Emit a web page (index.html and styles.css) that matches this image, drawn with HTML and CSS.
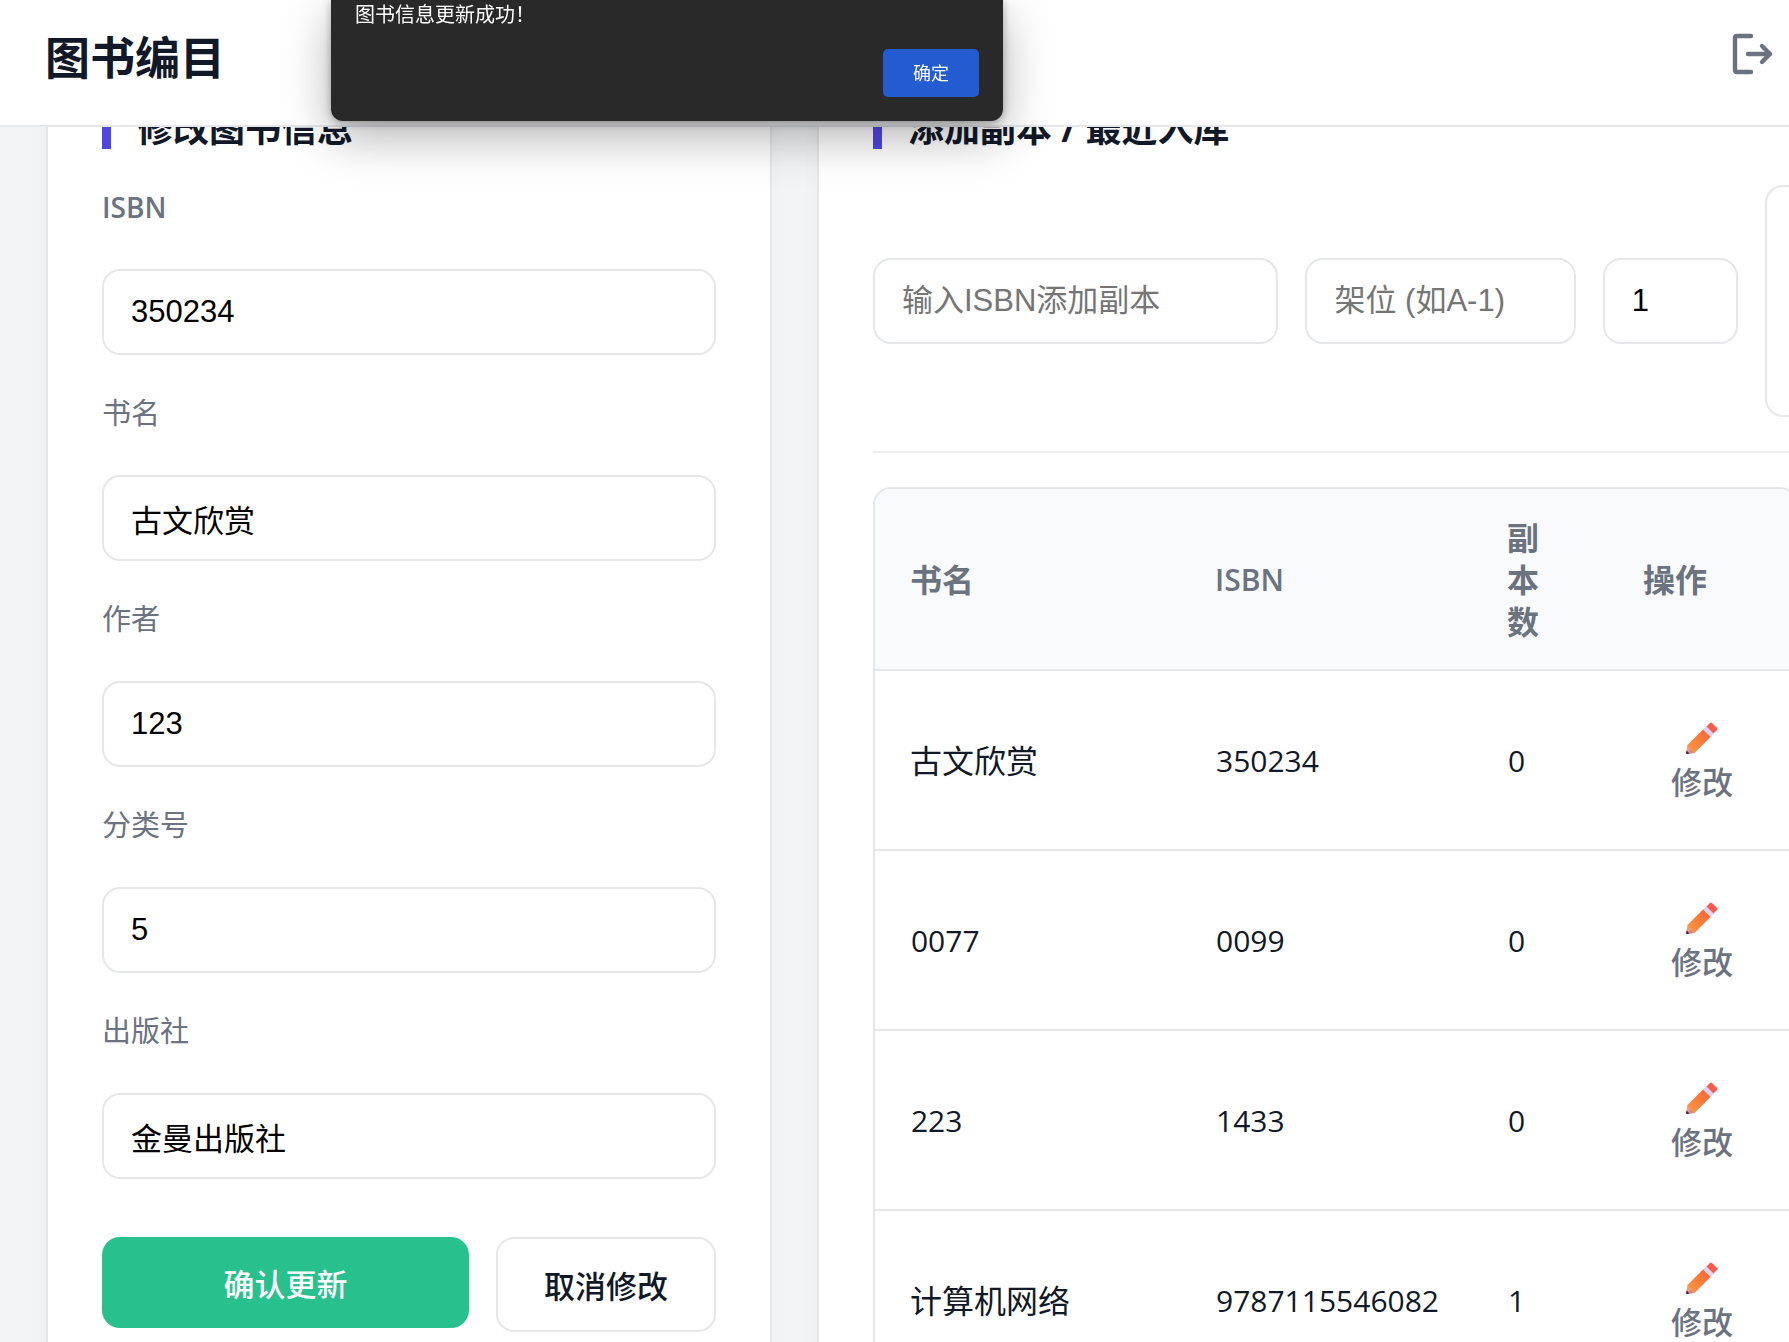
FILE: index.html
```html
<!DOCTYPE html>
<html lang="zh-CN">
<head>
<meta charset="utf-8">
<meta name="viewport" content="width=device-width, initial-scale=1">
<title>图书编目</title>
<link rel="stylesheet" href="styles.css">
</head>
<body>
<svg class="sprite" aria-hidden="true">
  <defs>
    <linearGradient id="wood" x1="0" y1="1" x2="1" y2="0">
      <stop offset="0" stop-color="#ff9a3d"/>
      <stop offset="1" stop-color="#f4623a"/>
    </linearGradient>
    <symbol id="pencil" viewBox="0 0 32 32">
      <path d="M1.500 23.500 8.500 30.500 1 32Q0 32 0 31Z" fill="#e3a58c"/>
      <path d="M4.500 27.500 8.500 31 1 32Z" fill="#d08a8f"/>
      <path d="M.6 28.600 3.400 31.400 1 32Q0 32 0 31Z" fill="#4a1d3c"/>
      <path d="M1 23.500 17.500 7 25 14.500 8.500 31Z" fill="url(#wood)"/>
      <path d="M17 7.500 20.500 4 28 11.500 24.500 15Z" fill="#dcd3ee"/>
      <path d="M20.500 4.500 24 1Q25 0 26 1L31 6Q32 7 31 8L27.500 11.500Z" fill="#fb5a4f"/>
    </symbol>
  </defs>
</svg>
<div class="app">
  <header class="topbar">
    <h1 class="topbar-title">图书编目</h1>
    <button class="logout" type="button" aria-label="退出">
      <svg width="48" height="48" viewBox="0 0 48 48" fill="none" stroke="currentColor" stroke-width="4.400" stroke-linecap="round" stroke-linejoin="round">
        <path d="M23 6H9Q7 6 7 8V40Q7 42 9 42H23"/>
        <path d="M20 24H42M34 16 42 24 34 32"/>
      </svg>
    </button>
  </header>
  <main class="content">
    <div class="columns">
      <section class="card">
        <h2 class="card-title">修改图书信息</h2>
        <form class="book-form">
          <div class="field">
            <label for="isbn" class="latin">ISBN</label>
            <input id="isbn" class="box" type="text" value="350234">
          </div>
          <div class="field">
            <label for="title">书名</label>
            <input id="title" class="box" type="text" value="古文欣赏">
          </div>
          <div class="field">
            <label for="author">作者</label>
            <input id="author" class="box" type="text" value="123">
          </div>
          <div class="field">
            <label for="category">分类号</label>
            <input id="category" class="box" type="text" value="5">
          </div>
          <div class="field">
            <label for="publisher">出版社</label>
            <input id="publisher" class="box" type="text" value="金曼出版社">
          </div>
          <div class="actions">
            <button class="btn btn-confirm" type="button">确认更新</button>
            <button class="btn btn-cancel" type="button">取消修改</button>
          </div>
        </form>
      </section>
      <section class="card">
        <h2 class="card-title">添加副本 / 最近入库</h2>
        <form class="copy-form">
          <input class="box" type="text" placeholder="输入ISBN添加副本" aria-label="ISBN">
          <input class="box" type="text" placeholder="架位 (如A-1)" aria-label="架位">
          <input class="box" type="text" value="1" aria-label="数量">
          <button class="copy-add" type="button" aria-label="添加副本"></button>
        </form>
        <div class="table-wrap">
          <table class="books">
            <colgroup>
              <col>
              <col class="col-isbn">
              <col class="col-count">
              <col class="col-action">
            </colgroup>
            <thead>
              <tr><th>书名</th><th class="latin">ISBN</th><th>副<br>本<br>数</th><th>操作</th></tr>
            </thead>
            <tbody>
              <tr>
                <td>古文欣赏</td><td class="num">350234</td><td class="num">0</td>
                <td class="action"><button class="edit" type="button"><svg width="32" height="32" aria-hidden="true"><use href="#pencil"/></svg>修改</button></td>
              </tr>
              <tr>
                <td class="num">0077</td><td class="num">0099</td><td class="num">0</td>
                <td class="action"><button class="edit" type="button"><svg width="32" height="32" aria-hidden="true"><use href="#pencil"/></svg>修改</button></td>
              </tr>
              <tr>
                <td class="num">223</td><td class="num">1433</td><td class="num">0</td>
                <td class="action"><button class="edit" type="button"><svg width="32" height="32" aria-hidden="true"><use href="#pencil"/></svg>修改</button></td>
              </tr>
              <tr>
                <td>计算机网络</td><td class="num">9787115546082</td><td class="num">1</td>
                <td class="action"><button class="edit" type="button"><svg width="32" height="32" aria-hidden="true"><use href="#pencil"/></svg>修改</button></td>
              </tr>
            </tbody>
          </table>
        </div>
      </section>
    </div>
  </main>
</div>
<div class="alert" role="alertdialog" aria-labelledby="alert-text">
  <p class="alert-text" id="alert-text">图书信息更新成功！</p>
  <button class="alert-ok" type="button">确定</button>
</div>
</body>
</html>
```
FILE: styles.css
```css
* {
  box-sizing: border-box;
}

body {
  margin: 0;
  background: #f3f4f6;
  color: #111827;
  font-family: "Open Sans", "Noto Sans CJK SC", sans-serif;
  font-size: 31px;
  line-height: 42px;
}

button,
input {
  margin: 0;
  font-family: inherit;
  font-size: 31px;
  line-height: 42px;
}

.sprite {
  position: absolute;
  width: 0;
  height: 0;
}

.app {
  display: flex;
  flex-direction: column;
  height: 100vh;
}

/* Top bar */
.topbar {
  flex: none;
  display: flex;
  align-items: center;
  justify-content: space-between;
  height: 127px;
  padding: 0 13px 10px 45px;
  background: #fff;
  border-bottom: 2px solid #e5e7eb;
}

.topbar-title {
  margin: 0;
  font-size: 45px;
  font-weight: 700;
  line-height: 60px;
}

.logout {
  padding: 0 0 7px;
  border: 0;
  background: none;
  color: #6b7280;
}

.logout svg {
  display: block;
}

/* Scrolled content */
.content {
  flex: 1;
  min-height: 0;
  overflow: hidden;
}

.columns {
  display: grid;
  grid-template-columns: 7fr 10fr;
  gap: 45px;
  margin: -74px -65px 0 46px;
}

.card {
  min-width: 0;
  padding: 54px;
  background: #fff;
  border: 2px solid #e5e7eb;
  border-radius: 27px;
  box-shadow: 0 4px 20px rgba(0, 0, 0, 0.03);
}

.card-title {
  margin: 0 0 36px;
  padding-left: 26px;
  border-left: 9px solid #4f46e5;
  font-size: 36px;
  font-weight: 700;
  line-height: 40px;
}

.box {
  min-width: 0;
  height: 86px;
  padding: 0 27px;
  border: 2px solid #e5e7eb;
  border-radius: 18px;
  background: #fff;
  color: #000;
  font-family: "Liberation Sans", "Noto Sans CJK SC", sans-serif;
}

.box::placeholder {
  color: #757575;
  opacity: 1;
}

/* Edit form */
.book-form {
  display: flex;
  flex-direction: column;
  gap: 36px;
}

.field {
  display: flex;
  flex-direction: column;
  gap: 40px;
}

.field label {
  color: #6b7280;
  font-size: 29px;
  line-height: 44px;
}

.field .latin {
  font-size: 28px;
  font-weight: 600;
}

.actions {
  display: flex;
  align-items: flex-start;
  gap: 27px;
  padding-top: 22px;
}

.btn {
  padding: 2px 46px 0;
  border-radius: 18px;
  font-weight: 500;
}

.btn-confirm {
  flex: 1;
  height: 91px;
  border: 0;
  background: #28c08c;
  color: #fff;
}

.btn-cancel {
  height: 95px;
  border: 2px solid #e5e7eb;
  background: #fff;
  color: #111827;
}

/* Copy form: the add button runs past the last column */
.copy-form {
  display: grid;
  grid-template-columns: 3fr 2fr 1fr 33px;
  align-items: center;
  gap: 27px;
  padding-bottom: 34px;
  border-bottom: 2px solid #eee;
}

.copy-add {
  width: 124px;
  height: 232px;
  border: 2px solid #e5e7eb;
  border-radius: 18px;
  background: #fff;
}

/* Book table */
.table-wrap {
  margin-top: 34px;
  overflow: hidden;
  border: 2px solid #e5e7eb;
  border-radius: 18px;
}

.books {
  width: 100%;
  table-layout: fixed;
  border-collapse: separate;
  border-spacing: 0;
  font-size: 32px;
}

.col-isbn {
  width: 292px;
}

.col-count {
  width: 136px;
}

.col-action {
  width: 188px;
}

.books th,
.books td {
  padding: 2px 36px 0 35px;
  border-bottom: 2px solid #e5e7eb;
  text-align: left;
  vertical-align: middle;
}

.books th {
  height: 182px;
  background: #f9fafc;
  color: #6b7280;
  font-weight: 700;
}

.books th.latin {
  font-size: 30px;
  font-weight: 600;
}

.books td {
  height: 180px;
}

.books .num {
  padding-left: 36px;
  font-size: 30px;
}

.books .action {
  padding: 5px 0 0;
}

.edit {
  display: flex;
  flex-direction: column;
  align-items: center;
  gap: 7px;
  width: 100%;
  padding: 0;
  border: 0;
  background: none;
  color: #6b7280;
  font-weight: 500;
}

/* Browser-style message box */
.alert {
  position: fixed;
  top: 0;
  left: 331px;
  z-index: 10;
  display: flex;
  flex-direction: column;
  gap: 19px;
  width: 672px;
  padding: 0 24px 24px;
  border-radius: 0 0 12px 12px;
  background: #292929;
  color: #fff;
  box-shadow: 0 2px 8px rgba(0, 0, 0, 0.3), 0 16px 48px rgba(0, 0, 0, 0.3);
}

.alert-text {
  margin: 0;
  font-size: 20px;
  line-height: 30px;
}

.alert-ok {
  align-self: flex-end;
  width: 96px;
  height: 48px;
  border: 0;
  border-radius: 5px;
  background: #235bd0;
  color: #fff;
  font-size: 18px;
  line-height: 24px;
}
```
